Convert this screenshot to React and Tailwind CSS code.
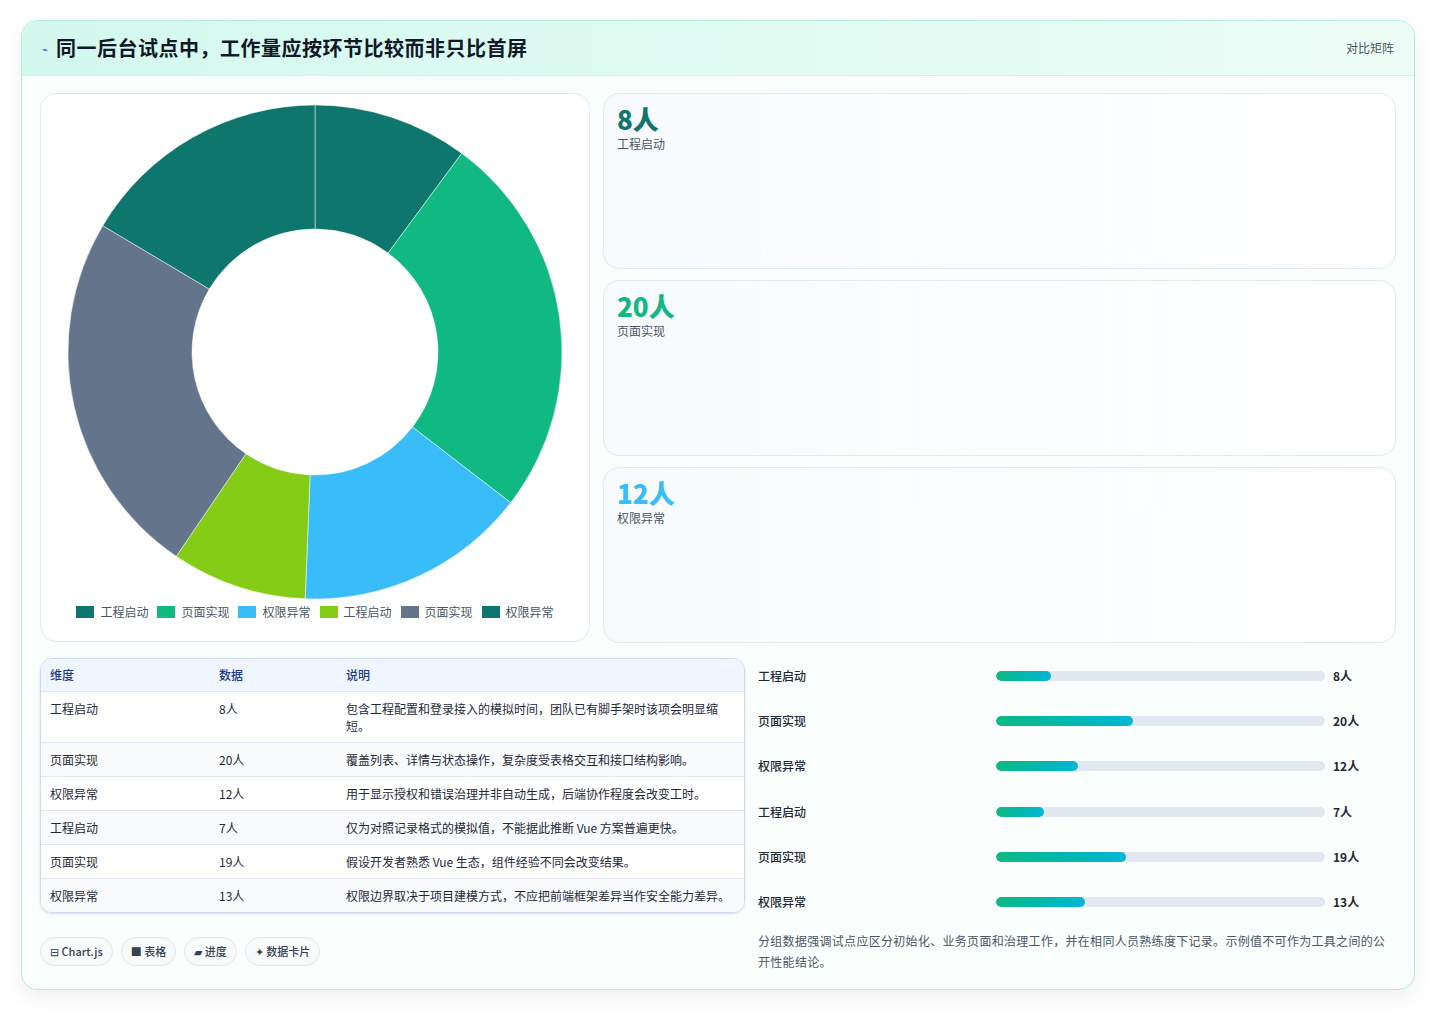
import React from "react";

const data = [
  ["工程启动", 8, "#0f766e", "包含工程配置和登录接入的模拟时间，团队已有脚手架时该项会明显缩短。"],
  ["页面实现", 20, "#10b981", "覆盖列表、详情与状态操作，复杂度受表格交互和接口结构影响。"],
  ["权限异常", 12, "#38bdf8", "用于显示授权和错误治理并非自动生成，后端协作程度会改变工时。"],
  ["工程启动", 7, "#84cc16", "仅为对照记录格式的模拟值，不能据此推断 Vue 方案普遍更快。"],
  ["页面实现", 19, "#64748b", "假设开发者熟悉 Vue 生态，组件经验不同会改变结果。"],
  ["权限异常", 13, "#0f766e", "权限边界取决于项目建模方式，不应把前端框架差异当作安全能力差异。"],
];

function Donut() {
  const total = data.reduce((s, d) => s + d[1], 0);
  const cx = 247, cy = 247, R = 247, r = 123;
  let a = 0;
  const pt = (rad, ang) => [cx + rad * Math.sin(ang), cy - rad * Math.cos(ang)];
  return (
    <svg width="494" height="494" viewBox="0 0 494 494">
      {data.map((d, i) => {
        const a0 = a, a1 = a + (d[1] / total) * Math.PI * 2;
        a = a1;
        const large = a1 - a0 > Math.PI ? 1 : 0;
        const [x0, y0] = pt(R, a0), [x1, y1] = pt(R, a1), [x2, y2] = pt(r, a1), [x3, y3] = pt(r, a0);
        return (
          <path key={i} fill={d[2]} stroke="#fff" strokeWidth="0.5"
            d={`M${x0} ${y0}A${R} ${R} 0 ${large} 1 ${x1} ${y1}L${x2} ${y2}A${r} ${r} 0 ${large} 0 ${x3} ${y3}Z`} />
        );
      })}
    </svg>
  );
}

export default function App() {
  const font = { fontFamily: '"Noto Sans CJK SC", "Noto Sans", sans-serif' };
  return (
    <div className="min-h-[1012px] bg-white pt-5 px-[21px]" style={font}>
      <div className="rounded-2xl border border-[#b4ecdc] bg-[#fafffd] shadow-[0_8px_20px_rgba(0,0,0,0.06)] overflow-hidden w-[1394px]">
        <div className="h-[55px] flex items-center justify-between px-5 bg-gradient-to-r from-[#d3f8ee] to-[#ecfdf6] border-b border-[#d7efe8]">
          <div className="flex items-center gap-2">
            <span className="text-[10px] text-[#2563eb]">⌁</span>
            <span className="text-[20px] font-bold text-[#111827] tracking-[0.5px]">同一后台试点中，工作量应按环节比较而非只比首屏</span>
          </div>
          <span className="text-xs text-[#4b5563]">对比矩阵</span>
        </div>
        <div className="px-[18px] pt-[17px] pb-[17px]">
          <div className="flex gap-[13px]">
            <div className="w-[550px] h-[549px] rounded-2xl border border-[#e2ebf0] bg-white flex flex-col items-center pt-[11px]">
              <Donut />
              <div className="flex gap-[9px] mt-[5px] text-xs text-[#4b5563]">
                {data.map((d, i) => (
                  <div key={i} className="flex items-center gap-[6px]">
                    <span className="w-[18px] h-[12px]" style={{ background: d[2] }} />
                    {d[0]}
                  </div>
                ))}
              </div>
            </div>
            <div className="flex-1 flex flex-col gap-[11px]">
              {[["8人", "工程启动", "#0f766e"], ["20人", "页面实现", "#10b981"], ["12人", "权限异常", "#38bdf8"]].map((s, i) => (
                <div key={i} className="h-[176px] rounded-2xl border border-[#e2ebf0] bg-gradient-to-r from-[#f8fbfd] to-white px-[13px] pt-[8px]">
                  <div className="text-[26px] font-extrabold leading-[34px]" style={{ color: s[2] }}>{s[0]}</div>
                  <div className="text-xs text-[#4b5563]">{s[1]}</div>
                </div>
              ))}
            </div>
          </div>
          <div className="flex gap-[13px] mt-[15px]">
            <div className="w-[705px]">
              <div className="rounded-xl border border-[#cfdbe6] overflow-hidden shadow-sm">
                <table className="w-full text-xs text-[#1f2937]">
                  <thead className="bg-[#eff6ff] text-[#1e3a8a]">
                    <tr className="h-[32px] text-left">
                      <th className="font-medium pl-[9px] w-[178px]">维度</th>
                      <th className="font-medium w-[127px]">数据</th>
                      <th className="font-medium">说明</th>
                    </tr>
                  </thead>
                  <tbody>
                    {data.map((d, i) => (
                      <tr key={i} className={`border-t border-[#e2e8f0] align-top leading-[17px] ${i % 2 ? "bg-[#f8fafc]" : "bg-white"}`}>
                        <td className="pl-[9px] py-[8px]">{d[0]}</td>
                        <td className="py-[8px]">{d[1]}人</td>
                        <td className="py-[8px] pr-3">{d[3]}</td>
                      </tr>
                    ))}
                  </tbody>
                </table>
              </div>
              <div className="flex gap-2 mt-6 text-[11px] text-[#374151] font-medium">
                {["⊟ Chart.js", "■ 表格", "▰ 进度", "✦ 数据卡片"].map((c) => (
                  <span key={c} className="h-[29px] px-[9px] flex items-center rounded-full border border-[#e5e7eb] bg-[#f9fafb]">{c}</span>
                ))}
              </div>
            </div>
            <div className="flex-1 -mt-[5px]">
              {data.map((d, i) => (
                <div key={i} className="h-[45.3px] flex items-center text-xs font-medium text-[#1f2937]">
                  <span className="w-[238px]">{d[0]}</span>
                  <div className="w-[329px] h-[10px] rounded-full bg-[#e2e8f0] overflow-hidden">
                    <div className="h-full rounded-full bg-gradient-to-r from-[#10b981] to-[#06b6d4]" style={{ width: `${(d[1] / 48) * 100}%` }} />
                  </div>
                  <span className="ml-2 font-bold">{d[1]}人</span>
                </div>
              ))}
              <p className="text-xs text-[#4b5563] mt-[5px] leading-[21px] tracking-[0.3px]">分组数据强调试点应区分初始化、业务页面和治理工作，并在相同人员熟练度下记录。示例值不可作为工具之间的公开性能结论。</p>
            </div>
          </div>
        </div>
      </div>
    </div>
  );
}
